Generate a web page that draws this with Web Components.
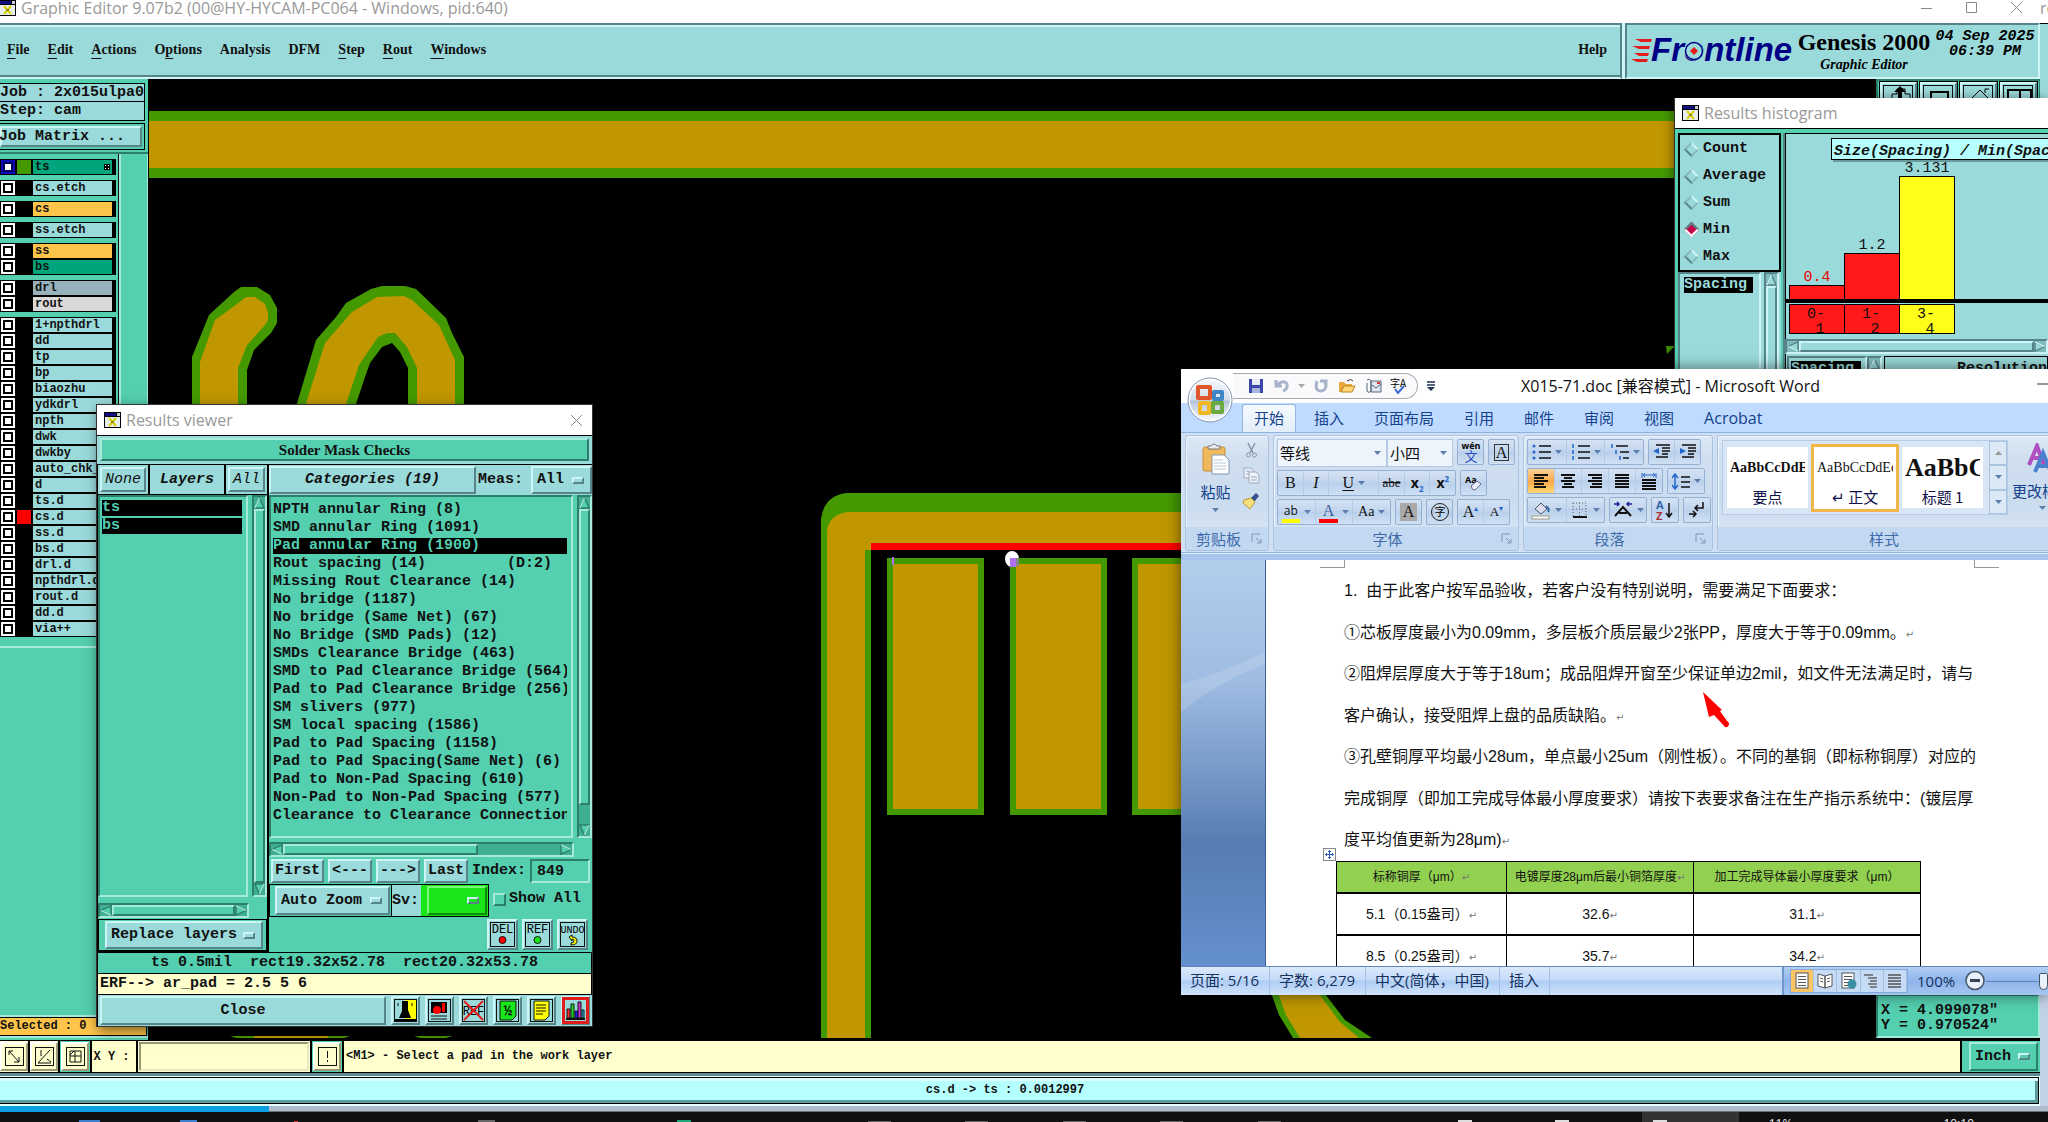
<!DOCTYPE html>
<html lang="zh-CN">
<head>
<meta charset="utf-8">
<title>Genesis 2000 Graphic Editor</title>
<style>
html,body{margin:0;height:100%;overflow:hidden;background:#000}
</style>
</head>
<body>
<cam-desktop>
  <editor-window slot="main"></editor-window>
  <results-viewer slot="viewer"></results-viewer>
  <results-histogram slot="histogram"></results-histogram>
  <word-window slot="word"></word-window>
</cam-desktop>
<script>
const BASE = `
*,:host{box-sizing:border-box}
:host{--aqua:#9bdada;--al:#cdf5f5;--ad:#578489;--teal:#54cfb0;--tl:#a6ead9;--td:#2b7f6b;--cream:#ffffcd;
 --mono:'Liberation Mono','DejaVu Sans Mono',monospace;--serif:'Liberation Serif','DejaVu Serif',serif;
 --ui:'Open Sans','Noto Sans','Noto Sans CJK SC',sans-serif}
button,select,input{font:inherit;color:inherit;margin:0;border-radius:0}
svg{display:block}
`;
function define(name, css, html) {
  const t = document.createElement('template');
  customElements.define(name, class extends HTMLElement {
    connectedCallback() {
      if (this.shadowRoot) return;
      this.attachShadow({mode: 'open'});
      t.innerHTML = `<style>${BASE}${css}</style>` + (typeof html === 'function' ? html(this) : html);
      this.shadowRoot.append(t.content.cloneNode(true));
    }
  });
}
const MONO = 'font:bold 15px/18px var(--mono);white-space:pre;';

/* ---------- shared widgets ---------- */
define('cam-desktop', `
:host{display:block;position:relative;width:100%;height:100vh;overflow:hidden;background:#101010}
::slotted(*){position:absolute}
::slotted([slot=main]){inset:0}
::slotted([slot=viewer]){left:96px;top:404px;width:497px}
::slotted([slot=histogram]){left:1674px;top:98px;right:0;height:300px}
::slotted([slot=word]){left:1181px;top:369px;right:0;height:626px}
`, `<slot name="main"></slot><slot name="viewer"></slot><slot name="histogram"></slot><slot name="word"></slot>`);

define('app-icon', `:host{display:block;width:17px;height:16px}`,
`<svg width="17" height="16"><rect width="17" height="16" fill="#000"/><rect x="1" y="5" width="15" height="10" fill="#e8eef0"/><rect x="1" y="1" width="11" height="3" fill="#101080"/><rect x="13" y="1" width="3" height="3" fill="#c8d0d0"/><path d="M5 6l7 8M12 6l-7 8" stroke="#d9d000" stroke-width="2"/><path d="M7 10h3" stroke="#444"/></svg>`);

define('window-title', `
:host{display:flex;align-items:center;height:30px;background:#fff;color:#999;font:16px/24px var(--ui);padding:0 10px 0 7px;gap:5px;white-space:nowrap;overflow:hidden}
h2{font:inherit;margin:0;flex:1}
button{border:0;background:none;padding:0;width:12px;height:20px;display:grid;place-items:center}
`, el => `<app-icon></app-icon><h2><slot></slot></h2>${el.hasAttribute('closable') ? '<button aria-label="Close window"><svg width="11" height="11"><path d="M0 0l11 11M11 0L0 11" stroke="#888" fill="none"/></svg></button>' : ''}`);

define('bevel-button', `
:host{display:block;background:var(--aqua)}
:host([tone=teal]){background:var(--teal)}
button{width:100%;height:100%;display:flex;align-items:center;justify-content:center;padding:0;background:inherit;border:2px solid;border-color:var(--al) var(--ad) var(--ad) var(--al);${MONO}color:#111}
:host([tone=teal]) button{border-color:var(--tl) var(--td) var(--td) var(--tl)}
:host([face=serif]) button{font:bold 15px/18px var(--serif)}
:host([face=italic]) button{font-style:italic}
:host([face=thin]) button{font-style:italic;font-weight:normal}
`, el => `<button${el.hasAttribute('label') ? ` aria-label="${el.getAttribute('label')}"` : ''}><slot></slot></button>`);

define('option-menu', `
:host{display:block;background:var(--aqua)}
:host([tone=teal]){background:var(--teal)}
:host([tone=green]){background:#19e619}
.b{display:flex;align-items:center;height:100%;padding:0 6px 0 4px;border:2px solid;border-color:var(--al) var(--ad) var(--ad) var(--al)}
:host([tone=teal]) .b{border-color:var(--tl) var(--td) var(--td) var(--tl)}
:host([tone=green]) .b{border-color:#7cf77c #0d8a0d #0d8a0d #7cf77c}
select{flex:1;min-width:0;appearance:none;border:0;background:none;padding:0;${MONO}color:#111}
i{width:12px;height:7px;border:2px solid;border-color:var(--al) var(--ad) var(--ad) var(--al)}
`, el => `<div class="b"><select aria-label="${el.getAttribute('label')}"><option>${el.getAttribute('value') || ''}</option></select><i></i></div>`);

define('scroll-bar', `
:host{display:flex;background:#3fae93;border:2px solid;border-color:var(--td) var(--tl) var(--tl) var(--td);--a:var(--teal);--l:var(--tl);--d:var(--td)}
:host([tone=aqua]){background:#7fbcbc;border-color:var(--ad) var(--al) var(--al) var(--ad);--a:var(--aqua);--l:var(--al);--d:var(--ad)}
:host([dir=v]){flex-direction:column;width:15px}
:host([dir=h]){height:15px}
svg{flex:none}
.t{border:2px solid;border-color:var(--l) var(--d) var(--d) var(--l);background:var(--a);min-width:0;min-height:0}
`, el => {
  const v = el.getAttribute('dir') === 'v', p = +(el.getAttribute('thumb') || 100);
  const tri = r => `<svg width="${v ? 11 : 12}" height="${v ? 12 : 11}" viewBox="0 0 12 12" preserveAspectRatio="none"><g transform="rotate(${r} 6 6)"><path d="M6 1L11 11H1z" style="fill:var(--a);stroke:var(--d)" stroke-width="1.5"/><path d="M6 1L1 11" style="stroke:var(--l)" stroke-width="1.5"/></g></svg>`;
  return `${tri(v ? 0 : -90)}<div class="t" style="flex:${p}"></div><div style="flex:${100 - p}"></div>${tri(v ? 180 : 90)}`;
});

/* ---------- editor ---------- */
define('layer-row', `
:host{display:block;height:16px;color:#111}
label{display:grid;grid-template-columns:16px 16px 1fr;height:16px;background:#000;padding:0 2px 0 0}
input{appearance:none;width:14px;height:14px;margin:1px;border:2px solid #fff;background:#fff;box-shadow:inset 0 0 0 2px #000}
:host([on]) input{border-color:#0b0bb0;box-shadow:inset 0 0 0 2px #000060}
.c{margin:1px}
.n{display:flex;align-items:center;justify-content:space-between;margin:1px;padding:0 2px;font:bold 12px/14px var(--mono);overflow:hidden}
svg{flex:none}
`, el => `<label><input type="checkbox"${el.hasAttribute('on') ? ' checked' : ''}><span class="c" style="background:${el.getAttribute('swatch') || '#000'}"></span><span class="n" style="background:${el.getAttribute('fill') || '#9bdada'}"><span>${el.getAttribute('name')}</span>${el.hasAttribute('on') ? '<svg width="6" height="6"><rect width="6" height="6"/><path d="M1 1h1v1H1zM4 1h1v1H4zM1 4h1v1H1zM4 4h1v1H4z" fill="#fff"/></svg>' : ''}</span></label>`);

define('layer-panel', `
:host{display:flex;flex-direction:column;width:149px;background:var(--teal);border-right:1px solid #000;color:#111;overflow:hidden}
.job{border:1px solid #000;border-left:0;background:var(--aqua);height:19px;margin-right:3px;${MONO}overflow:hidden;flex:none}
.job+.job{border-top:0}
.mx{border:1px solid #000;border-left:0;height:27px;margin:2px 3px 0 0;padding:2px 2px 2px 0;flex:none}
.mx bevel-button{height:21px}
.list{margin-top:2px;display:flex;border-top:2px solid #2b7f6b;flex:none}
.rows{width:119px;padding:5px 2px 9px 0;display:flex;flex-direction:column;gap:5px;border-right:1px solid #111;border-bottom:2px solid var(--tl)}
.g{border-right:1px solid #000}
.edge{flex:1;border-left:2px solid var(--tl);border-right:1px solid var(--tl)}
.sp{flex:1}
.sel{height:23px;border-top:2px solid var(--tl);border-bottom:2px solid var(--tl);padding-right:1px;margin-bottom:2px;flex:none}
.sel div{height:19px;border:1px solid #000;border-left:0;background:#ffc54a;font:bold 12px/17px var(--mono);white-space:pre}
.top{padding-top:4px}
`, () => {
  const A='#ffc54a', G='#00a57c';
  const groups = [[['ts',G,'#459900',1]],[['cs.etch']],[['cs',A]],[['ss.etch']],[['ss',A],['bs',G]],[['drl','#98b2bc'],['rout','#d9d9d9']],
   [['1+npthdrl'],['dd'],['tp'],['bp'],['biaozhu'],['ydkdrl'],['npth'],['dwk'],['dwkby'],['auto_chk_'],['d'],['ts.d'],['cs.d',,'#f00'],['ss.d'],['bs.d'],['drl.d'],['npthdrl.d'],['rout.d'],['dd.d'],['via++']]];
  return `<div class="top"></div><div class="job">Job : 2x015ulpa0</div><div class="job">Step: cam</div>
  <div class="mx"><bevel-button>Job Matrix ...  </bevel-button></div>
  <div class="list"><div class="rows">${groups.map(g => `<div class="g">${g.map(r => `<layer-row name="${r[0]}"${r[1] ? ` fill="${r[1]}"` : ''}${r[2] ? ` swatch="${r[2]}"` : ''}${r[3] ? ' on' : ''}></layer-row>`).join('')}</div>`).join('')}</div><div class="edge"></div></div>
  <div class="sp"></div><div class="sel"><div>Selected : 0</div></div>`;
});

define('editor-menu', `
:host{display:flex;align-items:center;flex:1;height:56px;background:var(--aqua);border:2px solid;border-color:var(--ad) var(--ad) var(--al) var(--al);border-left:0;padding:0 13px 2px 7px;color:#111;box-shadow:inset 0 2px var(--al),inset 0 -2px var(--ad)}
nav{display:flex;gap:18px;flex:1}
a{font:bold 14px/20px var(--serif);color:#111;text-decoration:none}
u{text-underline-offset:4px;text-decoration-thickness:1px;text-decoration-skip-ink:none}
`, `<nav><a href="#f"><u>F</u>ile</a><a href="#e"><u>E</u>dit</a><a href="#a"><u>A</u>ctions</a><a href="#o">O<u>p</u>tions</a><a href="#n">Analysis</a><a href="#d">DFM</a><a href="#s"><u>S</u>tep</a><a href="#r"><u>R</u>out</a><a href="#w"><u>W</u>indows</a></nav><a href="#h">Help</a>`);

define('brand-panel', `
:host{display:flex;width:415px;height:56px;background:var(--aqua);border:2px solid;border-color:var(--ad) var(--al) var(--al) var(--ad);padding:4px 1px 0 4px;color:#000;white-space:nowrap}
.logo{display:flex;align-items:center;width:164px;height:42px;color:#000087;font:italic bold 33px/36px 'Liberation Sans',sans-serif;flex:none}
.logo svg{flex:none;margin-right:-1px}
.o{position:relative}
.o svg{position:absolute;left:0;top:9px}
.mid{text-align:center;width:138px}
.g{font:bold 24px/26px var(--serif)}
.e{font:italic bold 14px/20px var(--serif)}
.d{flex:1;text-align:center;font:italic bold 15px/15px var(--mono);white-space:pre}
`, `<div class="logo"><svg width="21" height="26"><path d="M4 2h17l-1 3H10zM1 9h18l-1 3H8zM3 16h15l-1 3H8zM0 22h17l-1 3H6z" fill="#e31b1b"/></svg><span>Fr<span class="o">o<svg width="20" height="22"><circle cx="10" cy="11" r="9.5" fill="#9bdada"/><circle cx="10" cy="11" r="8.5" fill="#9bdada" stroke="#000087" stroke-width="1.5"/><path d="M10 7l4 4-4 4-4-4z" fill="#e31b1b"/></svg></span>ntline</span></div>
<div class="mid"><div class="g">Genesis 2000</div><div class="e">Graphic Editor</div></div><div class="d">04 Sep 2025
06:39 PM</div>`);

define('pcb-canvas', `:host{display:block;flex:1;min-width:0;background:#000;position:relative;overflow:hidden}
svg.b{width:100%;height:100%}
.tools{position:absolute;right:0;top:0;display:flex;gap:1px;background:var(--teal);border:2px solid var(--td);border-width:2px 1px 0 2px;padding:0 1px;height:30px}
.tools button{width:39px;height:30px;border:3px solid;border-color:var(--al) var(--ad) var(--ad) var(--al);background:var(--aqua);padding:1px;outline:1px solid #000;outline-offset:-1px}
.xy{position:absolute;right:0;bottom:2px;width:164px;height:44px;background:var(--teal);border:2px solid;border-color:var(--td) var(--tl) var(--tl) var(--td);${MONO}line-height:15px;padding:7px 3px 0;color:#111}
`, () => `<svg class="b"><g transform="translate(-149,-79)">
<rect x="149" y="111" width="1900" height="67" fill="#459900"/><rect x="149" y="121" width="1900" height="47" fill="#c09700"/>
<path fill="#459900" d="M192 410V357L209 315 234 292 241 287H257L270 295 277 308V323L271 333 254 350 247 370V410zM295 410L316 340 336 317 346 303 371 289 382 286H405L416 289 446 318 452 333 464 357V410H408V368L400 352 392 343 382 347 370 363 365 377 354 410z"/>
<path fill="#c09700" d="M200 410V362L215 320 237 304 246 297H255L265 304 268 313V320L265 325 247 345 238 368V410zM304 410L325 343 352 312 377 297 404 296 412 300 439 325 455 360V410H417V368L407 347 395 333H387L378 337 359 365 344 410z"/>
<path fill="#459900" d="M821 1038V519Q824 496 846 493H1200V550H871V1038z"/>
<path fill="#c09700" d="M827 1038V530Q830 514 848 512H1200V550H865V1038z"/>
<rect x="871" y="543" width="330" height="7" fill="#f00"/>
${[887,1010,1132].map(x => `<rect x="${x}" y="558" width="97" height="257" fill="#459900"/><rect x="${x+6}" y="564" width="85" height="245" fill="#c09700"/>`).join('')}
<ellipse cx="1012" cy="559" rx="7" ry="8" fill="#fff"/><rect x="1010" y="558" width="6" height="9" fill="#b070f0"/><rect x="1016" y="558" width="3" height="8" fill="#888"/><rect x="892" y="557" width="2" height="8" fill="#b070f0"/>
<path d="M1666 346h8v1l-7 7z" fill="#459900"/>
<path fill="#459900" d="M1270 990L1279 1015 1293 1038H1372L1345 1020 1322 990z"/><path fill="#c09700" d="M1277 990L1286 1015 1300 1038H1359L1340 1022 1316 990z"/>
<path fill="#459900" d="M230 1036H350L344 1038H236zM414 1036H452L446 1038H420z"/><rect x="254" y="1036" width="74" height="2" fill="#c09700"/>
</g></svg>
<div class="tools">${['M9 16V9h5V4h8v5h5v8','M8 17V7h17v10','M6 16L17 5l11 11M22 8V4h4','M5 17V5h23v12M17 5v12'].map((d, i) => `<button aria-label="View tool ${i+1}"><svg width="31" height="22"><rect x=".5" y=".5" width="29" height="24" fill="none" stroke="#111"/><path d="${d}" fill="none" stroke="#000" stroke-width="${i % 2 ? 2 : 1}"/>${i ? '' : '<path d="M17 1l-6 6h4v8h4V7h4z"/>'}</svg></button>`).join('')}</div>
<div class="xy">X = 4.099078"
Y = 0.970524"</div>`);

define('command-bar', `
:host{display:flex;height:33px;background:#000;padding:1px 0;gap:2px;color:#111;font:bold 12px/16px var(--mono);white-space:pre}
.k{background:var(--cream);display:flex;align-items:center}
.k button{height:29px;width:28px;padding:3px;border:2px solid;border-color:#fff #99997a #99997a #fff;background:var(--cream)}
.k:first-child button{width:24px;padding:3px 0}
.t{background:var(--teal);padding:0 1px}
.in{background:var(--cream);padding:1px;width:172px}
input{width:100%;height:29px;border:2px solid;border-color:#99997a #e8e8c0 #e8e8c0 #99997a;background:var(--cream);padding:0 8px}
.m{flex:1;background:var(--cream);padding:7px 2px;overflow:hidden}
option-menu{width:69px;height:29px}
.xyl{padding:0 8px 0 3px;width:44px;justify-content:center}
.u{background:var(--teal);padding:1px 2px 1px 7px;width:78px}
`, () => {
  const b = (n, d, c='') => `<div class="k ${c}"><button aria-label="${n}"><svg width="19" height="19"><rect x=".5" y=".5" width="18" height="18" fill="none" stroke="#111"/><path d="${d}" stroke="#111" fill="none"/></svg></button></div>`;
  return `${b('Snap','M4 4l10 11M4 8V4h4M14 10v5h-5')}${b('Angle','M3 16L15 3M3 16h13M6 3v6M12 12l4 3')}${b('Grid','M4 4h11v11H4zM4 9h11M9 4v11M4 8l4-4','t')}<label class="k xyl" for="xy">X Y :</label><div class="in"><input id="xy"></div>${b('Alert','M9.5 4v7M9.5 13v2','t')}<div class="m">&lt;M1&gt; - Select a pad in the work layer</div><div class="u"><option-menu tone="teal" label="Units" value="Inch"></option-menu></div>`;
});

define('task-bar', `
:host{display:grid;height:10px;background:#101010;color:#eee;overflow:hidden;font:12px/14px var(--ui)}
div{grid-area:1/1;display:flex;justify-content:flex-end;padding:5px 74px 0 0;gap:151px}
svg{grid-area:1/1;width:100%;height:10px}
`, `<svg><rect x="1642" width="97" height="10" fill="#333"/><path d="M79 8h21v2H79zM180 8h17v2h-17z" fill="#3d7fd0"/><path d="M294 9h4v1h-4z" fill="#d33"/><path d="M677 8h14v2h-14z" fill="#1ea878"/><path d="M478 8h17v2h-17zM868 9h23v1h-23zM965 9h23v1h-23zM1063 9h23v1h-23zM1160 9h23v1h-23zM1258 9h23v1h-23z" fill="#666"/><path d="M1458 8h14v2h-14zM1555 8h14v2h-14zM1653 8h14v2h-14z" fill="#ddd"/></svg><div><span>11%</span><span>10:10</span></div>`);

define('editor-window', `
:host{display:flex;flex-direction:column;background:#fff}
.row{display:flex;flex:none}
.main{display:flex;flex:1;min-height:0}
.ttl{height:23px;flex:none;display:flex;align-items:center;gap:5px;background:#fff;color:#999;font:16px/20px var(--ui);padding:0 17px 8px 0;white-space:nowrap}
app-icon{margin:0 0 0 -1px}
h1{font:inherit;margin:0;flex:1}
.ttl button{border:0;background:none;padding:0;width:12px;margin-left:28px}
.gap{width:3px;background:var(--al)}
.work{flex:1;min-height:0;display:flex}
.col{flex:1;min-width:0;display:flex;flex-direction:column}
.side{width:8px;display:flex;flex-direction:column;background:linear-gradient(#9bdada 50%,#c3d3e6 60%);overflow:hidden}
.side span{height:24px;background:#fff;border-bottom:1px solid #000;color:#999;font:16px/16px var(--ui);flex:none}
.st{height:33px;border:solid #5d8f92;border-width:3px 0 0;background:#e4ffff;padding:1px 1px 3px 0;flex:none}
.st div{height:27px;border:1px solid #000;border-left:0;background:#b5ffff;box-shadow:inset 0 3px #dcffff,inset -3px -3px #5d9a9c;font:bold 12px/25px var(--mono);text-align:center;white-space:pre;color:#111;padding-right:28px}
.foot{height:6px;display:flex;flex:none}
.foot i{width:269px;background:#0a9ee2}
.foot b{flex:1;background:#aebccb;border-bottom:1px solid #68727d}
task-bar,command-bar{flex:none}
`, `<div class="main"><div class="col">
<div class="ttl"><app-icon></app-icon><h1>Graphic Editor 9.07b2 (00@HY-HYCAM-PC064 - Windows, pid:640)</h1>
<button aria-label="Minimize"><svg width="11" height="11"><path d="M0 6.500h11" stroke="#888"/></svg></button><button aria-label="Maximize"><svg width="11" height="11"><path d="M.5.5h10v10H.5z" fill="none" stroke="#888"/></svg></button><button aria-label="Close"><svg width="11" height="11"><path d="M0 0l11 11M11 0L0 11" stroke="#888"/></svg></button></div>
<div class="row"><editor-menu></editor-menu><div class="gap"></div><brand-panel></brand-panel></div>
<div class="work"><layer-panel></layer-panel><pcb-canvas></pcb-canvas></div>
<command-bar></command-bar><div class="st"><div>cs.d -&gt; ts : 0.0012997</div></div></div><div class="side"><span>ro</span></div></div>
<div class="foot"><i></i><b></b></div><task-bar></task-bar>`);

/* ---------- results viewer ---------- */
define('text-list', `
:host{display:block;background:var(--teal);border:2px solid;border-color:var(--td) var(--tl) var(--tl) var(--td);padding:2px 4px 0 2px;color:#111;overflow:hidden}
:host([tone=aqua]){background:var(--aqua);border-color:var(--ad) var(--al) var(--al) var(--ad)}
ul{list-style:none;margin:0;padding:0;${MONO}}
li{overflow:hidden;height:18px;padding:1px 0;line-height:16px}
.s{background:#000 content-box;color:var(--teal)}
:host([tone=aqua]) .s{color:var(--aqua)}
`, el => `<ul>${el.getAttribute('items').split('|').map(s => s[0] === '*' ? `<li class="s">${s.slice(1)}</li>` : `<li>${s}</li>`).join('')}</ul>`);

define('results-viewer', `
:host{display:flex;flex-direction:column;background:#000;border:1px solid #333;box-shadow:2px 4px 12px rgba(0,0,0,.5);color:#111}
.hd{background:var(--aqua);padding:2px 3px 3px;margin-top:1px}
.hd bevel-button{height:23px}
.body{display:grid;grid-template-columns:169px 1fr;gap:2px;margin-top:1px;padding:0 1px;background:#000}
.l,.r{background:var(--teal);display:flex;flex-direction:column}
.lh{display:flex;gap:2px;height:30px;background:#000;padding-bottom:1px}
.lh>*{padding:2px;background:var(--aqua)}
.lh bevel-button:first-child{width:50px}
.lh bevel-button:last-child{width:41px}
.lh h3{flex:1;margin:0;text-align:center;font:italic bold 15px/26px var(--mono)}
.la{flex:1;display:flex;justify-content:space-between}
.la text-list{width:150px}
.hs{padding:6px 18px 1px 0}
.rep{height:33px;border:1px solid #000;border-bottom:2px solid #000;padding:1px 3px 1px 6px}
option-menu{height:100%}
.rh{display:flex;height:30px;background:var(--aqua);align-items:center}
.rh bevel-button{width:207px;height:28px}
.rh span{${MONO}padding:0 7px 0 2px;flex:1}
.rh option-menu{width:61px;height:28px}
.ra{height:343px;display:flex;justify-content:space-between}
.ra text-list{width:304px;padding-top:4px}
.rs{padding:4px 18px 2px 0}
.nav{display:flex;gap:4px;height:24px;align-items:center;padding:0 2px;${MONO}}
.nav bevel-button{height:24px;flex:none}
.nav input{width:60px;height:24px;border:2px solid;border-color:var(--td) var(--tl) var(--tl) var(--td);background:var(--teal);padding:0 5px}
.z{display:flex;height:33px;align-items:stretch;margin-top:1px;${MONO}}
.z .bx{border:1px solid #000;padding:1px 1px 1px 5px;width:123px}
.z .sv{border:1px solid #000;border-left:0;display:flex;background:var(--aqua);width:97px;line-height:31px}
.z .gr{flex:1;background:#19e619;padding:1px 1px 1px 6px;margin-left:2px}
.z label.c{display:flex;align-items:center;gap:3px;padding:0 0 3px 4px}
.z input{appearance:none;width:13px;height:13px;border:2px solid;border-color:var(--tl) var(--td) var(--td) var(--tl)}
.bt{display:flex;justify-content:flex-end;gap:4px;padding:2px 4px;flex:1}
.bt bevel-button{width:31px;height:31px}
.in{height:20px;background:var(--teal);margin:1px 1px;${MONO}text-align:center;line-height:20px}
.er{height:20px;background:var(--cream);margin:0 1px;${MONO}padding-left:2px;line-height:20px}
.cl{display:flex;gap:5px;background:var(--aqua);padding:1px 2px;margin:1px 0 0 1px}
.cl bevel-button{height:29px;width:29px}
.cl bevel-button:first-child{flex:1}
.cl .red{outline:3px solid #e31b1b;outline-offset:-4px}
`, () => {
  const cats = ['NPTH annular Ring (8)','SMD annular Ring (1091)','*Pad annular Ring (1900)','Rout spacing (14)         (D:2)','Missing Rout Clearance (14)','No bridge (1187)','No bridge (Same Net) (67)','No Bridge (SMD Pads) (12)','SMDs Clearance Bridge (463)','SMD to Pad Clearance Bridge (564)','Pad to Pad Clearance Bridge (256)','SM slivers (977)','SM local spacing (1586)','Pad to Pad Spacing (1158)','Pad to Pad Spacing(Same Net) (6)','Pad to Non-Pad Spacing (610)','Non-Pad to Non-Pad Spacing (577)','Clearance to Clearance Connection'].join('|');
  const t = (w, s) => `<svg width="25" height="25"><rect x=".5" y=".5" width="24" height="24" fill="none" stroke="#111"/><text x="12.500" y="11" text-anchor="middle" font-family="Liberation Mono" font-weight="normal" font-size="${w.length > 3 ? 10 : 12}">${w}</text>${s}</svg>`;
  const f = s => `<svg width="23" height="23"><rect x=".5" y=".5" width="22" height="22" fill="none" stroke="#111"/>${s}</svg>`;
  return `<window-title closable>Results viewer</window-title>
<div class="hd"><bevel-button tone="teal" face="serif">Solder Mask Checks</bevel-button></div>
<div class="body"><div class="l"><div class="lh"><bevel-button face="thin">None</bevel-button><h3>Layers</h3><bevel-button face="thin">All</bevel-button></div>
<div class="la"><text-list items="*ts|*bs"></text-list><scroll-bar dir="v"></scroll-bar></div><div class="hs"><scroll-bar dir="h"></scroll-bar></div><div class="rep"><option-menu label="Layer mode" value="Replace layers"></option-menu></div></div>
<div class="r"><div class="rh"><bevel-button face="italic">Categories (19)</bevel-button><span>Meas:</span><option-menu label="Measurement" value="All"></option-menu></div>
<div class="ra"><text-list items="${cats}"></text-list><scroll-bar dir="v" thumb="94"></scroll-bar></div><div class="rs"><scroll-bar dir="h" thumb="70"></scroll-bar></div>
<div class="nav"><bevel-button style="width:53px">First</bevel-button><bevel-button style="width:44px">&lt;---</bevel-button><bevel-button style="width:44px">---&gt;</bevel-button><bevel-button style="width:44px">Last</bevel-button><label for="ix" style="flex:1">Index:</label><input id="ix" value="849"></div>
<div class="z"><div class="bx"><option-menu label="Zoom mode" value="Auto Zoom"></option-menu></div><div class="sv">Sv:<div class="gr"><option-menu tone="green" label="Severity"></option-menu></div></div><label class="c"><input type="checkbox">Show All</label></div>
<div class="bt"><bevel-button>${t('DEL','<circle cx="12.500" cy="18" r="3.500" fill="#f00" stroke="#111"/>')}</bevel-button><bevel-button>${t('REF','<circle cx="12.500" cy="18" r="3.500" fill="#19e619" stroke="#111"/>')}</bevel-button><bevel-button>${t('UNDO','<path d="M9 15l3-2v2q5 0 5 4t-6 4v-2q3 0 3-2t-2-2v2z" fill="#ff0" stroke="#111"/>')}</bevel-button></div></div></div>
<div class="in">ts 0.5mil  rect19.32x52.78  rect20.32x53.78</div><div class="er">ERF--&gt; ar_pad = 2.5 5 6</div>
<div class="cl"><bevel-button>Close</bevel-button>
<bevel-button label="Highlight">${f('<path d="M11 1h11v21H11z" fill="#ff0"/><path d="M1 20h21v2H1zM8 2h6v9l3 8H5l3-7z"/><path d="M4 4v3M18 4v3" stroke="#111"/>')}</bevel-button><bevel-button label="Probe">${f('<path d="M3 3h16v11H3z"/><circle cx="9" cy="11" r="4" fill="#f00"/><path d="M14 4h3v9h-3z" fill="#f00"/><path d="M3 17h16M3 20h16" stroke="#111"/>')}</bevel-button><bevel-button label="Clear reference">${f('<text x="11.500" y="16" text-anchor="middle" font-family="Liberation Mono" font-weight="normal" font-size="12">REF</text><path d="M2 2l19 19M21 2L2 21" stroke="#e31b1b" stroke-width="2"/>')}</bevel-button><bevel-button label="Units">${f('<path d="M4 2h16v15l-4 4H4z" fill="#19e619" stroke="#111"/><text x="12" y="16" text-anchor="middle" font-family="Liberation Mono" font-size="14">½</text>')}</bevel-button><bevel-button label="Report">${f('<path d="M4 2h15v15l-4 4H4z" fill="#ff0" stroke="#111"/><path d="M6 6h10M6 9h10M6 12h10M6 15h7" stroke="#111"/>')}</bevel-button><bevel-button label="Histogram" class="red">${f('<path d="M2 20h19" stroke="#111" stroke-width="2"/><path d="M3 10h3v9H3z" fill="#f33" stroke="#111"/><path d="M7 5h3v14H7z" fill="#2d2" stroke="#111"/><path d="M11 12h3v7h-3z" fill="#22f" stroke="#111"/><path d="M14 3h3v16h-3z" fill="#c3c" stroke="#111"/><path d="M18 11h2v8h-2z" fill="#2cf" stroke="#111"/>')}</bevel-button></div>`;
});

/* ---------- histogram ---------- */
define('results-histogram', `
:host{display:flex;flex-direction:column;background:var(--teal);border-left:1px solid #333;box-shadow:-2px 0 10px rgba(0,0,0,.4);color:#111;overflow:hidden;font:bold 15px/18px var(--mono);white-space:nowrap}
window-title{border-bottom:1px solid #000;height:31px;flex:none}
.m{display:grid;grid-template-columns:103px 1fr;gap:2px;padding:4px 0 0 3px;flex:1}
.r{border:2px solid #000;background:var(--aqua);height:139px;padding:1px 4px 0;display:flex;flex-direction:column;justify-content:space-between}
.r label{display:flex;align-items:center;gap:4px;height:27px}
.r input{appearance:none;width:11px;height:11px;margin:2px;rotate:45deg;border:2px solid;border-color:var(--al) #86b9bd var(--ad) #86b9bd}
.r input:checked{background:#c8004a;border-color:var(--ad) #fff #fff var(--ad)}
.sl{display:flex;gap:3px;height:150px;background:var(--aqua);padding:0 2px 0 0}
.sl text-list{flex:1;padding:2px 6px 0 4px}
.c{background:var(--aqua);border-left:2px solid var(--ad);box-shadow:inset 1px 1px #000;overflow:hidden}
.t{margin:5px 0 0 46px;width:300px;height:22px;background:#b5ffff;border:1px solid #000;box-shadow:2px 2px #6a9a9c;font-style:italic;padding:4px 2px 0}
.bars{display:flex;align-items:flex-end;height:143px;padding-left:4px;border-bottom:4px solid #000}
.bars div,.bins div{width:56px;margin-right:-1px;text-align:center;font-weight:normal;display:flex;flex-direction:column}
.bars i{border:1px solid #000;border-bottom:0}
.bars span{line-height:14px}
.bins{display:flex;height:32px;padding:1px 0 0 4px}
.bins div{height:30px;border:1px solid #000;line-height:15px;padding-top:2px}
.bins span+span{padding-left:8px}
.bins span{padding-right:2px}
.b{display:flex;height:60px;margin-top:2px}
.b text-list{width:92px;margin-left:2px}
.b p{margin:0 0 0 2px;border:1px solid #000;flex:1;padding:3px 0 0 72px}
scroll-bar{flex:none}
.hb{margin:4px 0 0}
`, () => `<window-title>Results histogram</window-title><div class="m"><div><div class="r">${['Count','Average','Sum','Min','Max'].map(n => `<label><input type="radio" name="stat"${n === 'Min' ? ' checked' : ''}>${n}</label>`).join('')}</div>
<div class="sl"><text-list tone="aqua" items="*Spacing"></text-list><scroll-bar tone="aqua" dir="v"></scroll-bar></div></div>
<div class="c"><div class="t">Size(Spacing) / Min(Spacing)</div>
<div class="bars"><div style="color:#e00"><span>0.4</span><i style="height:14px;background:#ff1919"></i></div><div><span>1.2</span><i style="height:46px;background:#ff1919"></i></div><div><span>3.131</span><i style="height:123px;background:#ffff19"></i></div></div>
<div class="bins"><div style="background:#ff1919"><span>0-</span><span>1</span></div><div style="background:#ff1919"><span>1-</span><span>2</span></div><div style="background:#ffff19"><span>3-</span><span>4</span></div></div>
<scroll-bar class="hb" tone="aqua" dir="h"></scroll-bar><div class="b"><text-list tone="aqua" items="*Spacing"></text-list><scroll-bar tone="aqua" dir="v"></scroll-bar><p>Resolution</p></div></div></div>`);

/* ---------- word ---------- */
define('ribbon-group', `
:host{display:flex;flex-direction:column;height:116px;border:1px solid #a9c3e0;border-radius:3px;background:linear-gradient(#dde8f5,#cfdff0 20%,#cbdcef 60%,#dceaf7);flex:none;box-shadow:inset 1px 1px #eef5fc;overflow:hidden}
.b{flex:1;padding:3px 3px 0;min-height:0}
footer{height:23px;background:#c2d9f1;color:#3e6aaa;font:15px/22px 'Noto Sans CJK SC',sans-serif;display:flex;align-items:center;padding:0 6px 0 0}
footer span{flex:1;text-align:center}
`, el => `<div class="b"><slot></slot></div><footer><span>${el.getAttribute('name')}</span>${el.hasAttribute('more') ? '<svg width="11" height="11"><path d="M1 9V1h8M5 5l5 5M10 6v4H6" fill="none" stroke="#7d97bd"/></svg>' : ''}</footer>`);

define('tool-set', `
:host{display:flex;height:26px;border:1px solid #94b0d3;border-radius:2px;background:linear-gradient(#d5e2f3,#c3d6ee 45%,#b9cfea 50%,#cfe0f4);flex:none;overflow:hidden}
::slotted(button){border:0;border-right:1px solid #b5cae5;background:none;padding:0;flex:1;display:flex;align-items:center;justify-content:center;gap:4px;color:#222;font:bold 15px/20px 'Liberation Serif',serif;white-space:nowrap;min-width:0}
::slotted(button:last-child){border-right:0}
::slotted(button.on){background:linear-gradient(#fbd29a,#f9a94a 50%,#ffd873)}
`, `<slot></slot>`);

const AR = '<svg width="7" height="4"><path d="M0 0h7L3.500 4z" fill="#5d7fae"/></svg>';
const svg = (s, w=20, h=20) => `<svg width="${w}" height="${h}">${s}</svg>`;
const lines = a => svg(`<path d="${a.map((p, i) => `M${p[0]} ${2+i*3}H${p[1]}`).join('')}" stroke="#111" stroke-width="2"/>`, 18, 17);
const bl = c => svg(`<path d="M8 4h12M8 10h12M8 16h12" stroke="#111" stroke-width="1.500"/>${c}`, 20, 20);

define('word-ribbon', `
:host{display:flex;gap:4px;height:121px;padding:2px 0 2px 4px;background:#d0e0f2;border:solid #8fb3e0;border-width:1px 0;overflow:hidden}
.rows{display:flex;flex-direction:column;gap:3px}
.r{display:flex;gap:4px}
.clip{display:flex;height:100%}
.paste{flex:1;border:0;background:none;display:flex;flex-direction:column;align-items:center;gap:5px;padding:4px 0 0 5px;color:#15428b;font:15px/22px 'Noto Sans CJK SC',sans-serif}
.sm{width:28px;display:flex;flex-direction:column;gap:7px;align-items:center;padding-top:3px}
.sm button{border:0;background:none;padding:0}
.cb{display:flex;align-items:center;background:#edf4fc;border:1px solid #b3c8e3;height:28px;padding:0 5px 0 2px}
.cb select{appearance:none;border:0;background:none;flex:1;min-width:0;padding:0;font:15px/24px 'Noto Sans CJK SC',sans-serif;color:#111}
.gal{display:flex;height:75px;margin:1px 0 0 1px;border:1px solid #b5cbe6;background:#d7e5f5;padding:0 0 0 4px;gap:3px;align-items:center}
.st{width:81px;height:61px;background:#fff;border:0;padding:0 3px;overflow:hidden;color:#10104a;text-align:center;font:15px/20px 'Noto Sans CJK SC',sans-serif}
.st div{height:38px;line-height:38px;white-space:nowrap;overflow:hidden;color:#111;font-family:'Liberation Serif',serif;text-align:left}
.st.on{width:88px;height:68px;border:3px solid #f0b64a}
.up{width:18px;display:grid;align-self:stretch;margin-left:3px}
.up button{border:1px solid #a9c3e0;background:#dbe8f6;padding:0;display:grid;place-items:center}
.sty{display:flex}
.chg{width:70px;border:0;background:none;padding:4px 0 0 4px;color:#15428b;font:15px/22px 'Noto Sans CJK SC',sans-serif;white-space:nowrap;display:flex;flex-direction:column;align-items:center;gap:4px}
u.b{text-underline-offset:2px}
.a{border-bottom:4px solid red;line-height:17px;color:#3c5f9e;padding:0 4px}
.hl{border-bottom:4px solid #ff0;line-height:17px;font:12px/17px var(--ui);padding:0 2px}
.x{font:bold 14px/18px 'Open Sans',sans-serif}
sub,sup{font-size:8px;color:#26c;line-height:0}
`, () => `
<ribbon-group name="剪贴板" more style="width:84px"><div class="clip"><button class="paste">${svg('<rect x="1" y="4" width="22" height="24" rx="2" fill="#f0b95c" stroke="#c98f35"/><path d="M6 6V3h3q3-4 6 0h3v3z" fill="#e8eaee" stroke="#777"/><path d="M10 12h12l5 5v14H10z" fill="#fff" stroke="#8396b5"/><path d="M12 17h9M12 20h12M12 23h12M12 26h12" stroke="#b9c6da"/>',28,33)}粘贴${AR}</button><div class="sm"><button aria-label="剪切">${svg('<path d="M5 1l5 10M12 1L7 11" stroke="#8794aa" fill="none" stroke-width="1.500"/><circle cx="5.500" cy="13" r="2" stroke="#8794aa" fill="none"/><circle cx="11.500" cy="13" r="2" stroke="#8794aa" fill="none"/>',17,18)}</button><button aria-label="复制">${svg('<path d="M1 1h7l2 2v8H1z" fill="#eef2f8" stroke="#9aa7bd"/><path d="M6 5h7l3 3v8H6z" fill="#eef2f8" stroke="#9aa7bd"/><path d="M8 10h6M8 13h6M3 4h4M3 7h3" stroke="#9aa7bd"/>',17,18)}</button><button aria-label="格式刷">${svg('<path d="M9 6l5-5 3 3-5 6z" fill="#34508a"/><path d="M2 8l7-2 4 4-5 7-7-6z" fill="#f3df7c" stroke="#b99a37"/>',18,18)}</button></div></div></ribbon-group>
<ribbon-group name="字体" more style="width:246px"><div class="rows">
<div class="r"><div style="display:flex"><div class="cb" style="width:110px"><select aria-label="字体"><option>等线</option></select>${AR}</div><div class="cb" style="width:66px"><select aria-label="字号"><option>小四</option></select>${AR}</div></div><tool-set style="width:27px"><button aria-label="拼音指南"><svg width="20" height="22"><text x="10" y="8" text-anchor="middle" font-size="9" font-weight="bold" font-family="Open Sans">wén</text><text x="10" y="20" text-anchor="middle" font-size="13" fill="#2a4fc0" font-family="Noto Sans CJK SC">文</text></svg></button></tool-set><tool-set style="width:27px"><button><span style="border:1px solid #333;padding:0 1px;line-height:15px">A</span></button></tool-set></div>
<div class="r"><tool-set style="width:179px"><button>B</button><button><i>I</i></button><button style="flex:2"><u class="b">U</u>${AR}</button><button><s style="font-size:13px">abe</s></button><button><span class="x">x<sub>2</sub></span></button><button><span class="x">x<sup>2</sup></span></button></tool-set><tool-set style="width:27px"><button aria-label="清除格式">${svg('<text x="1" y="10" font-size="9" font-weight="bold" font-family="Open Sans">Aa</text><path d="M7 13l6-5 4 3-6 6q-3 1-4-4z" fill="#eef" stroke="#668"/>')}</button></tool-set></div>
<div class="r"><tool-set style="width:114px"><button><span class="hl">ab</span>${AR}</button><button><span class="a">A</span>${AR}</button><button><span style="font-size:14px">Aa</span>${AR}</button></tool-set><tool-set style="width:27px"><button><span style="background:#aaa;padding:0 3px">A</span></button></tool-set><tool-set style="width:27px"><button aria-label="带圈字符">${svg('<circle cx="10" cy="10" r="8.500" fill="none" stroke="#222"/><text x="10" y="14" text-anchor="middle" font-size="11" font-family="Noto Sans CJK SC">字</text>')}</button></tool-set><tool-set style="width:53px"><button><span>A<sup>▴</sup></span></button><button><span style="font-size:13px">A<sup>▾</sup></span></button></tool-set></div></div></ribbon-group>
<ribbon-group name="段落" more style="width:190px"><div class="rows">
<div class="r"><tool-set style="width:117px"><button aria-label="项目符号">${bl('<circle cx="3" cy="4" r="1.500" fill="#26c"/><circle cx="3" cy="10" r="1.500" fill="#26c"/><circle cx="3" cy="16" r="1.500" fill="#26c"/>')}${AR}</button><button aria-label="编号">${bl('<path d="M3 2v4M3 8v4M3 14v4" stroke="#26c" stroke-width="1.500"/>')}${AR}</button><button aria-label="多级列表">${svg('<path d="M7 4h12M11 10h9M14 16h6" stroke="#111" stroke-width="1.500"/><path d="M3 2v4M7 8v4M11 14v4" stroke="#26c" stroke-width="1.500"/>')}${AR}</button></tool-set><tool-set style="width:53px"><button aria-label="减少缩进">${svg('<path d="M4 3h14M10 6h8M10 9h8M10 12h6M4 15h12" stroke="#111" stroke-width="1.500"/><path d="M7 6v6L1 9z" fill="#26c"/>')}</button><button aria-label="增加缩进">${svg('<path d="M4 3h14M10 6h8M10 9h8M10 12h6M4 15h12" stroke="#111" stroke-width="1.500"/><path d="M2 6v6l6-3z" fill="#26c"/>')}</button></tool-set></div>
<div class="r"><tool-set style="width:136px"><button class="on" aria-label="左对齐">${lines([[2,16],[2,12],[2,16],[2,12],[2,14]])}</button><button aria-label="居中">${lines([[2,16],[5,13],[2,16],[5,13],[3,15]])}</button><button aria-label="右对齐">${lines([[2,16],[6,16],[2,16],[6,16],[4,16]])}</button><button aria-label="两端对齐">${lines([[2,16],[2,16],[2,16],[2,16],[2,16]])}</button><button aria-label="分散对齐">${svg('<path d="M2 2v5M16 2v5M3 4h12M5 2L3 4l2 2M13 2l2 2-2 2" stroke="#26c" fill="none"/><path d="M2 9h14M2 12h14M2 15h14M2 18h14" stroke="#111" stroke-width="2"/>',18,20)}</button></tool-set><tool-set style="width:38px"><button aria-label="行距">${svg('<path d="M3 3v13M0 6l3-4 3 4M0 13l3 4 3-4" stroke="#26c" fill="none" stroke-width="1.500"/><path d="M9 5h9M9 10h9M9 15h9" stroke="#111" stroke-width="1.500"/>',18,19)}${AR}</button></tool-set></div>
<div class="r"><tool-set style="width:78px"><button aria-label="底纹">${svg('<path d="M4 9l6-6 6 6-6 5z" fill="#dde" stroke="#456"/><path d="M15 6q4 3 2 6" stroke="#36a" fill="none" stroke-width="2"/><rect x="1" y="16" width="17" height="3" fill="#fff" stroke="#998"/>')}${AR}</button><button aria-label="边框">${svg('<path d="M2 3h13v13M2 3v13M8.500 3v13M2 9h13" stroke="#567" stroke-dasharray="1 2" fill="none"/><path d="M2 17h14" stroke="#111" stroke-width="2"/>',18,20)}${AR}</button></tool-set><tool-set style="width:38px"><button aria-label="中文版式">${svg('<path d="M2 16L10 7l8 9M6 13h8" stroke="#111" fill="none" stroke-width="2"/><path d="M1 4h5M14 4h5M4 2l2 2-2 2M16 2l-2 2 2 2" stroke="#229" fill="none" stroke-width="1.500"/>')}${AR}</button></tool-set><tool-set style="width:28px"><button aria-label="排序"><svg width="18" height="22"><text x="0" y="10" font-size="11" font-weight="bold" fill="#36a" font-family="Open Sans">A</text><text x="0" y="21" font-size="11" font-weight="bold" fill="#a33" font-family="Open Sans">Z</text><path d="M13 4v13M10 14l3 4 3-4" stroke="#111" fill="none" stroke-width="1.500"/></svg></button></tool-set><tool-set style="width:28px"><button aria-label="显示标记">${svg('<path d="M16 2v6H8M11 5L8 8l3 3M2 14h7M6 11l3 3-3 3" stroke="#111" fill="none" stroke-width="1.500"/>')}</button></tool-set></div></div></ribbon-group>
<ribbon-group name="样式" style="flex:1;min-width:340px"><div class="sty"><div class="gal"><button class="st"><div style="font-size:14px;font-weight:bold">AaBbCcDdE</div>要点</button><button class="st on"><div style="font-size:14px">AaBbCcDdEe</div>↵ 正文</button><button class="st"><div style="font-size:26px;font-weight:bold">AaBbC</div>标题 1</button><div class="up"><button aria-label="上一行"><svg width="7" height="4"><path d="M0 4h7L3.500 0z" fill="#999"/></svg></button><button aria-label="下一行">${AR}</button><button aria-label="更多">${AR}</button></div></div><button class="chg">${svg('<path d="M3 22L11 3l7 19M6 15h9" stroke="#b050c0" stroke-width="4" fill="none"/><path d="M9 29l8-19 8 19M12 23h10" stroke="#4a80d0" stroke-width="4" fill="none"/>',32,33)}更改样式${AR}</button></div></ribbon-group>`);

define('word-page', `
:host{display:block;background:#fff;color:#111;position:relative;overflow:hidden;font:16px/24px 'Liberation Sans','Noto Sans CJK SC',sans-serif;border-left:1px solid #3d5f92}
.marks{display:flex;justify-content:space-between;padding:0 49px 0 54px;height:9px}
.marks i{width:25px;height:8px;border:1px solid #999;border-width:0 1px 1px 0}
.marks i+i{border-width:0 0 1px 1px}
.tx{display:flex;flex-direction:column;justify-content:space-between;height:273px;margin:10px 0 0 78px}
p{margin:0;white-space:pre;line-height:24px}
em{font:10px/10px 'DejaVu Sans',sans-serif;color:#777}
table{margin:9px 0 0 70px;width:585px;border-collapse:collapse;table-layout:fixed}
th,td{border:2px solid #000;border-width:1px 1px 2px;padding:0;text-align:center;font:14px/20px 'Liberation Sans','Noto Sans CJK SC',sans-serif;height:42px;white-space:nowrap}
th{background:#92d050;font-size:12px;height:31px}
.arrow{position:absolute;left:432px;top:128px}
.anchor{position:absolute;left:57px;top:288px}
`, () => `<div class="marks"><i></i><i></i></div><div class="tx"><p>1.  由于此客户按军品验收，若客户没有特别说明，需要满足下面要求：</p><p>①芯板厚度最小为0.09mm，多层板介质层最少2张PP，厚度大于等于0.09mm。<em>↵</em></p><p>②阻焊层厚度大于等于18um；成品阻焊开窗至少保证单边2mil，如文件无法满足时，请与</p><p>客户确认，接受阻焊上盘的品质缺陷。<em>↵</em></p><p>③孔壁铜厚平均最小28um，单点最小25um（刚性板）。不同的基铜（即标称铜厚）对应的</p><p>完成铜厚（即加工完成导体最小厚度要求）请按下表要求备注在生产指示系统中：(镀层厚</p><p>度平均值更新为28μm)<em>↵</em></p></div>
<table><colgroup><col style="width:170px"><col style="width:187px"><col></colgroup><tr><th>标称铜厚（μm）<em>↵</em></th><th>电镀厚度28μm后最小铜箔厚度<em>↵</em></th><th>加工完成导体最小厚度要求（μm）</th></tr><tr><td>5.1（0.15盎司）<em>↵</em></td><td>32.6<em>↵</em></td><td>31.1<em>↵</em></td></tr><tr><td>8.5（0.25盎司）<em>↵</em></td><td>35.7<em>↵</em></td><td>34.2<em>↵</em></td></tr></table>
<svg class="arrow" width="34" height="42"><path d="M5 4L24 22 18 25 31 35Q31 40 27 39L16 27 11 29z" fill="#f00"/><path d="M18 22L29 37" stroke="#f00" stroke-width="5"/></svg>
<svg class="anchor" width="13" height="13"><rect x=".5" y=".5" width="12" height="12" fill="#fff" stroke="#888"/><path d="M6.500 2v9M2 6.500h9M5 3.500h3M5 9.500h3M3.500 5v3M9.500 5v3" stroke="#2a5db0"/></svg>`);

define('word-status', `
:host{display:flex;height:29px;background:linear-gradient(#dbe9fb,#c4dbf8 45%,#aecdf4 50%,#cfe3fb);border-top:1px solid #5f86bd;color:#15315f;font:15px/27px 'Open Sans','Noto Sans CJK SC',sans-serif;white-space:nowrap;overflow:hidden}
span{padding:0 10px 0 9px;border-right:1px solid #a3c1e6}
.f{flex:1}
.z{display:flex;align-items:center;background:linear-gradient(#b3cff5,#8db4ea 50%,#a5c6f2);padding-left:6px;border-left:2px solid #6f97cc;width:266px;flex:none}
.v{display:flex;border:1px solid #86a8d6;height:24px;background:#c5dbf6;width:118px}
.v button{border:0;padding:0;background:none;flex:1;display:grid;place-items:center;border-right:1px solid #a3c1e6}
.v button:first-child{background:#fbc766}
b{font-weight:normal;padding:0 9px}
.z>button{border:0;background:none;padding:0}
input{appearance:none;background:linear-gradient(#5f86bd,#5f86bd) center/100% 1px no-repeat;height:20px;flex:1;min-width:0;direction:rtl}
input::-webkit-slider-thumb{appearance:none;width:9px;height:17px;border:1px solid #456;border-radius:2px 2px 5px 5px;background:#e8f0fa}
`, () => {
  const d = s => svg(`<rect x="2" y="1" width="12" height="15" fill="#fff" stroke="#555"/><path d="M4 4.500h8M4 7.500h8M4 10.500h8M4 13.500h8" stroke="#555"/>${s}`,17,18);
  return `<span>页面: 5/16</span><span>字数: 6,279</span><span>中文(简体，中国)</span><span>插入</span><div class="f"></div><div class="z"><div class="v"><button aria-label="页面视图">${d('')}</button><button aria-label="阅读视图">${svg('<path d="M1 2l7 2v12l-7-2zM15 2L8 4v12l7-2z" fill="#fff" stroke="#555"/><path d="M3 6l3 1M3 9l3 1M13 6l-3 1M13 9l-3 1" stroke="#555"/>',17,18)}</button><button aria-label="Web 视图">${d('<circle cx="12" cy="12" r="4.500" fill="#3b8fa5"/>')}</button><button aria-label="大纲视图">${svg('<path d="M1 3h9M5 6h9M7 9h7M5 12h9M7 15h7" stroke="#666" stroke-width="1.500"/>',17,18)}</button><button aria-label="草稿视图">${svg('<path d="M2 3h13M2 6h13M2 9h13M2 12h13M2 15h13" stroke="#555" stroke-width="1.500"/>',17,18)}</button></div><b>100%</b><button aria-label="缩小">${svg('<circle cx="11" cy="10.500" r="9" fill="#e8f1fc" stroke="#456" stroke-width="1.500"/><path d="M6 10.500h10" stroke="#345" stroke-width="3"/>',22,22)}</button><input type="range" min="0" max="100" value="0" aria-label="缩放"></div>`;
});

define('word-window', `
:host{display:flex;flex-direction:column;background:#fff;box-shadow:0 0 14px rgba(0,0,0,.55);overflow:hidden;color:#111}
.t{display:flex;height:34px;align-items:center;flex:none;position:relative}
.orb{position:absolute;left:6px;top:8px;z-index:1;border:0;background:none;padding:0}
.q{margin-left:52px;width:185px;height:26px;border:1px solid #a9a9ae;border-left:0;border-radius:0 13px 13px 0;display:flex;align-items:center;gap:8px;padding-left:15px;background:#fafafc}
.q button{border:0;background:none;padding:0;display:flex;align-items:center;gap:8px}
.dd{border:0;background:none;padding:0;margin-left:8px}
h2{font:16px/24px 'Open Sans','Noto Sans CJK SC',sans-serif;margin:0 0 0 85px;white-space:nowrap;flex:1}
nav{display:flex;height:29px;background:#bfdbff;padding-left:61px;align-items:flex-end;flex:none}
nav a{padding:0 15px;font:15px/27px 'Open Sans','Noto Sans CJK SC',sans-serif;color:#15428b;text-decoration:none}
nav a.on{padding:0 11px;margin-right:3px;background:linear-gradient(#f5fafe,#e3eefa);border:1px solid #94b6e2;border-bottom:0;border-radius:3px 3px 0 0}
nav a:last-child{font-size:16px}
.band{height:7px;background:#a7c4ea;border-top:1px solid #d8f4fa;flex:none}
.d{flex:1;min-height:0;display:grid;grid-template-columns:84px 1fr}
.d svg{width:100%;height:100%}
`, () => `<div class="t"><button class="orb" aria-label="Office 按钮">${svg('<defs><linearGradient id="o" x2="0" y2="1"><stop stop-color="#f4f7fb"/><stop offset=".5" stop-color="#d3dcea"/><stop offset=".52" stop-color="#b4c4dc"/><stop offset="1" stop-color="#f6f9fd"/></linearGradient></defs><circle cx="23" cy="23" r="22" fill="#fff" stroke="#8095b5"/><circle cx="23" cy="23" r="20" fill="url(#o)"/><g fill="none" stroke-width="4" stroke-linejoin="round"><path d="M11 10h12v11H11z" stroke="#e0562a"/><path d="M27 15h8v7h-8z" stroke="#3d86c6"/><path d="M13 26h9v10h-9z" stroke="#f0b722"/><path d="M26 26h9v9h-9z" stroke="#6aa93c"/></g>',46,46)}</button>
<div class="q"><button aria-label="保存">${svg('<path d="M1 2h14v14H1z" fill="#3b47a8"/><path d="M4 2h8v6H4z" fill="#e8ecf8"/><path d="M4 11h8v5H4z" fill="#aab4dd"/>',17,18)}</button><button aria-label="撤消">${svg('<path d="M3 3v6h6M4 8q7-6 10-1 1 5-4 7" stroke="#a9b4cc" stroke-width="3" fill="none"/>',17,18)}<svg width="7" height="4"><path d="M0 0h7L3.500 4z" fill="#aaa"/></svg></button><button aria-label="恢复">${svg('<path d="M4 4q-3 10 4 10 7-1 4-9M7 4h6v4" stroke="#a9b4cc" stroke-width="3" fill="none"/>',17,18)}</button><button aria-label="打开">${svg('<path d="M1 15V5h5l2 2h6v8z" fill="#e8a93c"/><path d="M3 15l3-6h11l-3 6z" fill="#ffd777" stroke="#b98427"/><path d="M9 4q4-3 6 0" stroke="#333" fill="none"/>',18,18)}</button><button aria-label="邮件">${svg('<path d="M7 4h10v11H7z" fill="#dfe6f2" stroke="#567"/><path d="M8 8l4 3 5-4" stroke="#567" fill="none"/><path d="M3 6v8q2 3 4 0V4q-1-3-4-1" fill="none" stroke="#567"/><rect x="13" y="5" width="3" height="2" fill="#d33"/>',18,18)}</button><button aria-label="拼写检查">${svg('<text x="0" y="10" font-size="10" font-family="Noto Sans CJK SC">字A</text><path d="M5 12l3 4 6-7" stroke="#36c" stroke-width="2" fill="none"/>',18,18)}</button></div><button class="dd" aria-label="自定义">${svg('<path d="M1 1h8M1 4h8" stroke="#235" stroke-width="1.500"/><path d="M1 6h8l-4 4z" fill="#235"/>',10,10)}</button><h2>X015-71.doc [兼容模式] - Microsoft Word</h2><svg width="11" height="6"><path d="M0 1h11" stroke="#333"/></svg></div>
<nav><a class="on" href="#1">开始</a><a href="#2">插入</a><a href="#3">页面布局</a><a href="#4">引用</a><a href="#5">邮件</a><a href="#6">审阅</a><a href="#7">视图</a><a href="#8">Acrobat</a></nav>
<word-ribbon></word-ribbon><div class="band"></div>
<div class="d"><svg viewBox="0 0 84 406" preserveAspectRatio="none"><defs><linearGradient id="g" x2="0" y2="1"><stop stop-color="#b3cdec"/><stop offset=".3" stop-color="#9fbce2"/><stop offset=".7" stop-color="#567db2"/><stop offset="1" stop-color="#6590cf"/></linearGradient></defs><rect width="84" height="406" fill="url(#g)"/><path d="M0 124Q50 110 84 92V104Q40 120 0 152z" fill="#fff" opacity=".15"/></svg><word-page></word-page></div>
<word-status></word-status>`);
</script>
</body>
</html>
